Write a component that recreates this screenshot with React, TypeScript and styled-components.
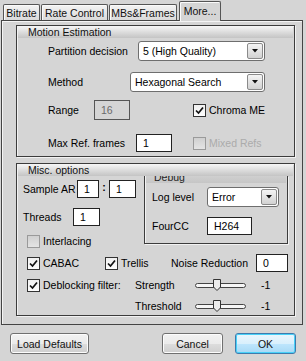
import styled, { createGlobalStyle } from 'styled-components'

const GlobalStyle = createGlobalStyle`
  * { box-sizing: border-box; }
  body {
    margin: 0;
    background: #d5d5d5;
    font-family: "Liberation Sans", Arial, sans-serif;
    font-size: 10.5px;
    color: #000;
  }
`

const tabs = [
  { label: 'Bitrate', width: 37 },
  { label: 'Rate Control', width: 67 },
  { label: 'MBs&Frames', width: 68 },
  { label: 'More...', width: 42, active: true },
]

const Check = ({ checked, disabled }: { checked?: boolean; disabled?: boolean }) => (
  <CheckBox $disabled={disabled}>
    {checked && (
      <svg width="11" height="11" viewBox="0 0 11 11">
        <path d="M2 5.5 L4.5 8 L9 2.5" fill="none" stroke="#111" strokeWidth="1.7" />
      </svg>
    )}
  </CheckBox>
)

const Select = ({ value, w }: { value: string; w: number }) => (
  <SelectBox $w={w}>
    <span>{value}</span>
    <DropButton>
      <svg width="6" height="4" viewBox="0 0 6 4">
        <polygon points="0,0 6,0 3,3.5" fill="#111" />
      </svg>
    </DropButton>
  </SelectBox>
)

const Slider = ({ pos }: { pos: number }) => (
  <svg width="52" height="13" viewBox="0 0 52 13">
    <rect x="0.5" y="4.5" width="50" height="4" rx="2" fill="#f6f6f6" stroke="#444" />
    <polygon
      points={`${pos + 0.5},0.5 ${pos + 7.5},0.5 ${pos + 7.5},8 ${pos + 4},11.5 ${pos + 0.5},8`}
      fill="#ececec"
      stroke="#333"
    />
  </svg>
)

const App = () => {
  return (
    <Dialog>
      <GlobalStyle />
      <TabBar>
        {tabs.map((t) => (
          <Tab key={t.label} $active={t.active} $w={t.width}>
            {t.label}
          </Tab>
        ))}
      </TabBar>
      <Panel>
        <Group $h={132}>
          <GroupHeader>Motion Estimation</GroupHeader>
          <Row $top={3} $h={20} $pad={31}>
            <Label $w={90}>Partition decision</Label>
            <Select value="5 (High Quality)" w={127} />
          </Row>
          <Row $top={11} $h={20} $pad={31}>
            <Label $w={82}>Method</Label>
            <Select value="Hexagonal Search" w={135} />
          </Row>
          <Row $top={8} $h={20} $pad={31}>
            <Label $w={46}>Range</Label>
            <TextBox $w={36} $h={20} $disabled>16</TextBox>
            <CheckItem $ml={63}>
              <Check checked />
              <span>Chroma ME</span>
            </CheckItem>
          </Row>
          <Row $top={14} $h={18} $pad={31}>
            <Label $w={88}>Max Ref. frames</Label>
            <TextBox $w={36} $h={18}>1</TextBox>
            <CheckItem $ml={21} $disabled>
              <Check disabled />
              <span>Mixed Refs</span>
            </CheckItem>
          </Row>
        </Group>

        <Group $h={153} $top={6}>
          <GroupHeader>Misc. options</GroupHeader>
          <TopArea>
            <LeftColumn>
              <Row $top={4} $h={18} $pad={6}>
                <Label $w={54}>Sample AR</Label>
                <TextBox $w={22} $h={18}>1</TextBox>
                <Colon>:</Colon>
                <TextBox $w={27} $h={18}>1</TextBox>
              </Row>
              <Row $top={10} $h={18} $pad={6}>
                <Label $w={50}>Threads</Label>
                <TextBox $w={27} $h={18}>1</TextBox>
              </Row>
              <Row $top={8} $h={14} $pad={10}>
                <CheckItem>
                  <Check disabled />
                  <span>Interlacing</span>
                </CheckItem>
              </Row>
            </LeftColumn>
            <DebugBox>
              <DebugHeader>
                <span>Debug</span>
              </DebugHeader>
              <Row $top={4} $h={20} $pad={7}>
                <Label $w={55}>Log level</Label>
                <Select value="Error" w={72} />
              </Row>
              <Row $top={10} $h={18} $pad={7}>
                <Label $w={55}>FourCC</Label>
                <TextBox $w={45} $h={18}>H264</TextBox>
              </Row>
            </DebugBox>
          </TopArea>
          <Row $top={6} $h={18} $pad={10}>
            <CheckItem $w={78}>
              <Check checked />
              <span>CABAC</span>
            </CheckItem>
            <CheckItem $w={66}>
              <Check checked />
              <span>Trellis</span>
            </CheckItem>
            <Label $w={85}>Noise Reduction</Label>
            <TextBox $w={32} $h={18}>0</TextBox>
          </Row>
          <Row $top={4} $h={18} $pad={10}>
            <CheckItem $w={108}>
              <Check checked />
              <span>Deblocking filter:</span>
            </CheckItem>
            <Label $w={60}>Strength</Label>
            <Slider pos={18} />
            <Value>-1</Value>
          </Row>
          <Row $top={3} $h={18} $pad={118}>
            <Label $w={60}>Threshold</Label>
            <Slider pos={18} />
            <Value>-1</Value>
          </Row>
        </Group>
      </Panel>
      <Footer>
        <Button $w={79}>Load Defaults</Button>
        <Spacer />
        <Button $w={61}>Cancel</Button>
        <Button $w={61} $primary>
          OK
        </Button>
      </Footer>
    </Dialog>
  )
}

const Dialog = styled.div`
  width: 306px;
  height: 361px;
  background: #d5d5d5;
  overflow: hidden;
`

const TabBar = styled.div`
  display: flex;
  align-items: flex-end;
  gap: 1px;
  height: 20px;
  padding-left: 3px;
`

const Tab = styled.div<{ $active?: boolean; $w: number }>`
  position: relative;
  z-index: ${(p) => (p.$active ? 2 : 1)};
  width: ${(p) => p.$w}px;
  height: ${(p) => (p.$active ? 20 : 16)}px;
  margin-bottom: ${(p) => (p.$active ? -1 : 0)}px;
  margin-left: ${(p) => (p.$active ? 1 : 0)}px;
  border: 1px solid #555;
  border-bottom: none;
  border-radius: 2px 2px 0 0;
  background: ${(p) =>
    p.$active ? '#d5d5d5' : 'linear-gradient(#f3f3f3, #dadada)'};
  box-shadow: inset 1px 1px 0 #fafafa;
  display: flex;
  align-items: ${(p) => (p.$active ? 'flex-start' : 'center')};
  padding-top: ${(p) => (p.$active ? 3 : 0)}px;
  justify-content: center;
  white-space: nowrap;
  color: #111;
`

const Panel = styled.div`
  margin-left: 1px;
  width: 302px;
  height: 305px;
  border: 1px solid #444;
  box-shadow: inset 1px 1px 0 #f4f4f4;
  padding: 4px 0 0 14px;
`

const Group = styled.div<{ $h: number; $top?: number }>`
  width: 279px;
  height: ${(p) => p.$h}px;
  margin-top: ${(p) => p.$top || 0}px;
  border: 1px solid #3c3c3c;
  box-shadow: inset 1px 1px 0 #f2f2f2, 1px 1px 0 #f2f2f2;
  display: flex;
  flex-direction: column;
`

const GroupHeader = styled.div`
  height: 12px;
  margin: 0 1px;
  padding-left: 10px;
  background: linear-gradient(#f6f6f6, #c4c4c4);
  line-height: 12px;
  color: #111;
  white-space: nowrap;
`

const Row = styled.div<{ $top: number; $h: number; $pad: number }>`
  display: flex;
  align-items: center;
  margin-top: ${(p) => p.$top}px;
  height: ${(p) => p.$h}px;
  padding-left: ${(p) => p.$pad}px;
  flex-shrink: 0;
`

const Label = styled.span<{ $w: number }>`
  width: ${(p) => p.$w}px;
  flex-shrink: 0;
  white-space: nowrap;
`

const SelectBox = styled.div<{ $w: number }>`
  width: ${(p) => p.$w}px;
  height: 20px;
  border: 1px solid #6e6e6e;
  border-radius: 3px;
  background: #fff;
  display: flex;
  align-items: center;
  padding: 0 1px 0 4px;
  span {
    flex: 1;
    white-space: nowrap;
  }
`

const DropButton = styled.div`
  width: 16px;
  height: 16px;
  border: 1px solid #8a8a8a;
  border-radius: 2px;
  background: linear-gradient(#f4f4f4, #d2d2d2);
  display: flex;
  align-items: center;
  justify-content: center;
`

const TextBox = styled.div<{ $w: number; $h: number; $disabled?: boolean }>`
  width: ${(p) => p.$w}px;
  height: ${(p) => p.$h}px;
  flex-shrink: 0;
  border: 1px solid ${(p) => (p.$disabled ? '#555' : '#222')};
  background: ${(p) => (p.$disabled ? '#d5d5d5' : '#fff')};
  color: ${(p) => (p.$disabled ? '#6a6a6a' : '#000')};
  padding-left: 6px;
  display: flex;
  align-items: center;
`

const CheckItem = styled.div<{ $w?: number; $ml?: number; $disabled?: boolean }>`
  display: flex;
  align-items: center;
  gap: 3px;
  width: ${(p) => (p.$w ? `${p.$w}px` : 'auto')};
  margin-left: ${(p) => p.$ml || 0}px;
  flex-shrink: 0;
  white-space: nowrap;
  color: ${(p) => (p.$disabled ? '#ababab' : '#000')};
`

const CheckBox = styled.div<{ $disabled?: boolean }>`
  width: 13px;
  height: 13px;
  border: 1px solid ${(p) => (p.$disabled ? '#9a9a9a' : '#333')};
  background: ${(p) =>
    p.$disabled ? 'linear-gradient(#d0d0d0, #e4e4e4)' : 'linear-gradient(#f0f0f0, #fdfdfd)'};
  display: flex;
  align-items: center;
  justify-content: center;
`

const Colon = styled.span`
  width: 10px;
  text-align: center;
  font-weight: bold;
  margin-top: -4px;
`

const TopArea = styled.div`
  display: flex;
`

const LeftColumn = styled.div`
  width: 127px;
  display: flex;
  flex-direction: column;
`

const DebugBox = styled.div`
  width: 144px;
  height: 68px;
  border: 1px solid #3c3c3c;
  border-top: none;
  box-shadow: inset 1px 0 0 #f2f2f2, 1px 1px 0 #f2f2f2;
  display: flex;
  flex-direction: column;
`

const DebugHeader = styled.div`
  height: 7px;
  margin: 0 1px;
  padding-left: 8px;
  overflow: hidden;
  background: linear-gradient(#cfcfcf, #c6c6c6);
  span {
    display: block;
    line-height: 12px;
    margin-top: -5px;
    color: #222;
  }
`

const Value = styled.span`
  margin-left: 14px;
`

const Footer = styled.div`
  display: flex;
  gap: 12px;
  padding: 8px 10px 0 10px;
`

const Spacer = styled.div`
  flex: 1;
`

const Button = styled.div<{ $w: number; $primary?: boolean }>`
  width: ${(p) => p.$w}px;
  height: 21px;
  border: 1px solid ${(p) => (p.$primary ? '#3d7bad' : '#707070')};
  border-radius: 3px;
  background: ${(p) =>
    p.$primary
      ? 'linear-gradient(#eaf6fd 0%, #d9f0fc 50%, #bee6fd 51%, #a7d9f5 100%)'
      : 'linear-gradient(#f2f2f2 0%, #ebebeb 50%, #dddddd 51%, #cfcfcf 100%)'};
  box-shadow: inset 0 0 0 1px ${(p) => (p.$primary ? '#48d1f8' : '#fcfcfc')};
  display: flex;
  align-items: center;
  justify-content: center;
  white-space: nowrap;
  color: #111;
`

export default App
